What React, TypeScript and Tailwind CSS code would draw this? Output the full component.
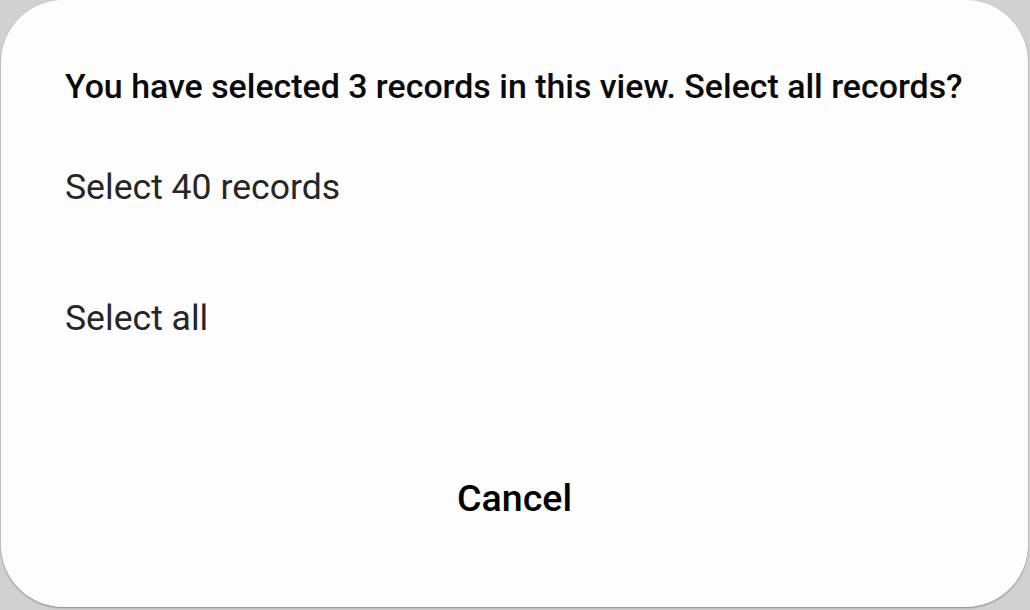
import { useState } from 'react';

export default function App() {
  const [choice, setChoice] = useState<string | null>(null);

  const options = [
    { key: 'page', label: 'Select 40 records' },
    { key: 'all', label: 'Select all' },
  ];

  return (
    <div
      className="w-[1030px] h-[610px] bg-[#d1d1d1] overflow-hidden pl-px pr-[2px] pb-[3px]"
      style={{ fontFamily: 'Roboto, "Noto Sans", Arial, sans-serif' }}
    >
      {/* Dialog */}
      <div className="h-full bg-[#fdfdfd] rounded-[62px] shadow-[0_1px_2px_rgba(0,0,0,0.35)] flex flex-col">
        <h2 className="pt-[67px] px-16 text-[33.9px] leading-[40px] font-medium text-[#0a0a0a] whitespace-nowrap">
          You have selected 3 records in this view. Select all records?
        </h2>

        <div className="flex flex-col mt-[59px]">
          {options.map((opt) => (
            <button
              key={opt.key}
              onClick={() => setChoice(opt.key)}
              className={`flex items-start h-[131px] px-16 text-left text-[35.6px] leading-[42px] text-[#262626] ${
                choice === opt.key ? 'bg-[#f3f3f3]' : ''
              }`}
            >
              {opt.label}
            </button>
          ))}
        </div>

        <div className="flex-1 flex items-start justify-center pt-[48px]">
          <button className="text-[37.6px] leading-[44px] font-medium text-black">Cancel</button>
        </div>
      </div>
    </div>
  );
}
